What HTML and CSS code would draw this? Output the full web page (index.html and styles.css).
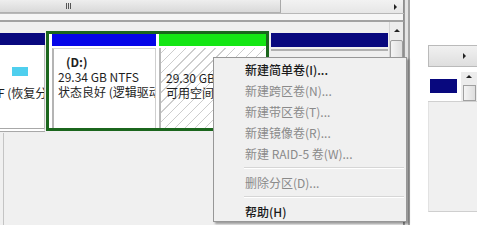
FILE: index.html
```html
<!DOCTYPE html>
<html>
<head>
<meta charset="utf-8">
<link rel="stylesheet" href="styles.css">
</head>
<body>
<div class="screen">
  <div class="main">
    <div class="hscroll">
      <div class="hthumb"><span class="grip"></span></div>
      <div class="htrack"><span class="arrow-right"></span></div>
    </div>
    <div class="strip"></div>
    <div class="disk">
      <div class="parts">
        <div class="part part-rec">
          <div class="bar navy"></div>
          <div class="rec-body">
            <span class="swatch"></span>
            <span class="rec-text">F (恢复分区)</span>
          </div>
        </div>
        <div class="extended">
          <div class="part part-d">
            <div class="bar blue"></div>
            <div class="box d-box">
              <div class="vol">(D:)</div>
              <div class="line">29.34 GB NTFS</div>
              <div class="line">状态良好 (逻辑驱动器)</div>
            </div>
          </div>
          <div class="part part-free">
            <div class="bar green"></div>
            <div class="box free-box">
              <div class="line">29.30 GB</div>
              <div class="line">可用空间</div>
            </div>
          </div>
        </div>
        <div class="part part-3">
          <div class="bar navy tall"></div>
          <div class="box third-box"></div>
        </div>
      </div>
      <div class="vscroll">
        <span class="arrow-up"></span>
        <div class="vthumb"></div>
      </div>
    </div>
    <div class="lower"></div>
  </div>
  <div class="edge"></div>
  <div class="side">
    <div class="side-scroll"><span class="arrow-right"></span></div>
    <div class="side-row">
      <div class="side-navy"></div>
      <div class="side-vscroll">
        <span class="arrow-up"></span>
        <div class="side-thumb"></div>
      </div>
    </div>
    <div class="side-lower"></div>
  </div>
</div>
<div class="menu">
  <div class="item">新建简单卷(I)...</div>
  <div class="item off">新建跨区卷(N)...</div>
  <div class="item off">新建带区卷(T)...</div>
  <div class="item off">新建镜像卷(R)...</div>
  <div class="item off">新建 RAID-5 卷(W)...</div>
  <div class="sep"></div>
  <div class="item off">删除分区(D)...</div>
  <div class="sep"></div>
  <div class="item">帮助(H)</div>
</div>
</body>
</html>
```
FILE: styles.css
```css
* { box-sizing: border-box; }
html, body {
  margin: 0;
  padding: 0;
  width: 480px;
  height: 225px;
  overflow: hidden;
  background: #f0f0f0;
  font-family: "Noto Sans CJK SC", "Noto Sans", sans-serif;
  font-size: 12px;
  color: #1e1e1e;
}
.screen {
  position: relative;
  display: flex;
  width: 480px;
  height: 225px;
}
.main {
  width: 404px;
  display: flex;
  flex-direction: column;
  background: #f0f0f0;
}
.hscroll {
  height: 14px;
  display: flex;
  border-bottom: 1px solid #b8b8b8;
}
.hthumb {
  width: 281px;
  background: linear-gradient(#eeeeee, #d9d9d9);
  border-right: 1px solid #a9a9a9;
  border-bottom: 1px solid #b0b0b0;
  display: flex;
  align-items: center;
  padding-left: 66px;
}
.grip {
  width: 6px;
  height: 6px;
  background: repeating-linear-gradient(90deg, #555 0 1px, transparent 1px 2px);
}
.htrack {
  flex: 1;
  background: linear-gradient(#f2f2f2, #e6e6e6);
  border-right: 1px solid #8e8e8e;
  display: flex;
  align-items: center;
  justify-content: flex-end;
  padding-right: 6px;
}
.arrow-right {
  width: 0;
  height: 0;
  border-top: 3px solid transparent;
  border-bottom: 3px solid transparent;
  border-left: 3px solid #222;
}
.strip {
  height: 8px;
  background: #f6f6f6;
  border-bottom: 2px solid #a2a2a2;
  border-right: 1px solid #8e8e8e;
}
.disk {
  height: 111px;
  display: flex;
}
.parts {
  flex: 1;
  display: flex;
  align-items: flex-start;
  padding-top: 9px;
  background: #efefef;
}
.part {
  display: flex;
  flex-direction: column;
}
.bar { height: 12px; }
.bar.tall { height: 14px; }
.navy { background: #08087e; }
.blue { background: #0505e8; }
.green { background: #14e614; }
.part-rec {
  width: 45px;
  margin-top: 2px;
}
.rec-body {
  height: 87px;
  background: #fff;
  border-right: 1px solid #bdbdbd;
  border-bottom: 4px double #a8a8a8;
  display: flex;
  flex-direction: column;
  overflow: hidden;
  white-space: nowrap;
}
.swatch {
  width: 16px;
  height: 9px;
  background: #4fcfee;
  margin: 22px 0 0 12px;
}
.rec-text {
  margin: 9px 0 0 -2px;
  line-height: 16px;
}
.extended {
  width: 223px;
  height: 100px;
  margin-left: 1px;
  border: 3px solid #1b661d;
  background: #fff;
  display: flex;
  gap: 3px;
  padding-left: 3px;
}
.part-d { width: 104px; }
.part-free { flex: 1; }
.box {
  flex: 1;
  margin-top: 2px;
  overflow: hidden;
  white-space: nowrap;
}
.d-box {
  border-left: 2px solid #b4b4b4;
  border-top: 1px solid #d4d4d4;
  border-right: 1px solid #cfcfcf;
  background: #fff;
  padding: 5px 0 0 4px;
}
.vol {
  font-weight: bold;
  padding-left: 8px;
  line-height: 15px;
}
.line { line-height: 15px; }
.free-box {
  border-left: 2px solid #b8b8b8;
  background: repeating-linear-gradient(135deg, #fff 0 3px, #cdcdcd 3px 4px, #fff 4px 7px);
  padding: 22px 0 0 5px;
}
.part-3 {
  width: 117px;
  margin-left: 2px;
  margin-top: 2px;
}
.third-box {
  height: 80px;
  border: 1px solid #b0b0b0;
  background: #fff;
}
.vscroll {
  width: 15px;
  background: #ececec;
  border-left: 1px solid #d4d4d4;
  border-right: 1px solid #8e8e8e;
  display: flex;
  flex-direction: column;
  align-items: center;
  padding-top: 7px;
}
.arrow-up {
  width: 0;
  height: 0;
  border-left: 3px solid transparent;
  border-right: 3px solid transparent;
  border-bottom: 3px solid #222;
}
.vthumb {
  width: 13px;
  height: 60px;
  margin-top: 8px;
  background: linear-gradient(90deg, #f4f4f4, #dedede);
  border: 1px solid #9d9d9d;
  border-radius: 2px;
}
.lower {
  flex: 1;
  margin-left: 3px;
  border-left: 1px solid #c4c4c4;
  border-right: 1px solid #8e8e8e;
  background: #f0f0f0;
}
.edge {
  width: 6px;
  background: #e4e4e4;
  border-left: 1px solid #9a9a9a;
  border-right: 2px solid #a6a6a6;
}
.side {
  flex: 1;
  background: #fff;
  display: flex;
  flex-direction: column;
  padding: 45px 3px 13px 18px;
}
.side-scroll {
  height: 22px;
  background: linear-gradient(#f1f1f1, #dedede);
  border: 1px solid #bababa;
  border-right: none;
  display: flex;
  align-items: center;
  justify-content: flex-end;
  padding-right: 11px;
}
.side-row {
  display: flex;
  margin-top: 5px;
  background: #fff;
  border-bottom: 1px solid #d0d0d0;
}
.side-navy {
  width: 27px;
  height: 14px;
  margin: 7px 0 8px 2px;
  background: #08087e;
}
.side-vscroll {
  margin-left: auto;
  width: 16px;
  display: flex;
  flex-direction: column;
  align-items: center;
  padding-top: 3px;
  background: #ececec;
}
.side-thumb {
  width: 13px;
  height: 16px;
  margin-top: 7px;
  background: linear-gradient(90deg, #f4f4f4, #dedede);
  border: 1px solid #a0a0a0;
}
.side-lower {
  flex: 1;
  background: #f0f0f0;
  border-bottom: 1px solid #cfcfcf;
  border-left: 1px solid #e2e2e2;
}
.menu {
  position: absolute;
  left: 213px;
  top: 57px;
  width: 194px;
  height: 165px;
  background: #f0f0f0;
  border: 1px solid #979797;
  box-shadow: 2px 2px 2px rgba(0, 0, 0, 0.35);
  padding: 1px 2px;
  display: flex;
  flex-direction: column;
}
.item {
  height: 21px;
  line-height: 21px;
  padding-left: 29px;
  white-space: nowrap;
  color: #1a1a1a;
  font-weight: 500;
}
.item.off {
  color: #8a8a8a;
  font-weight: 400;
}
.sep {
  height: 2px;
  margin: 3px 0 3px 28px;
  border-top: 1px solid #d6d6d6;
  border-bottom: 1px solid #ffffff;
}
```
